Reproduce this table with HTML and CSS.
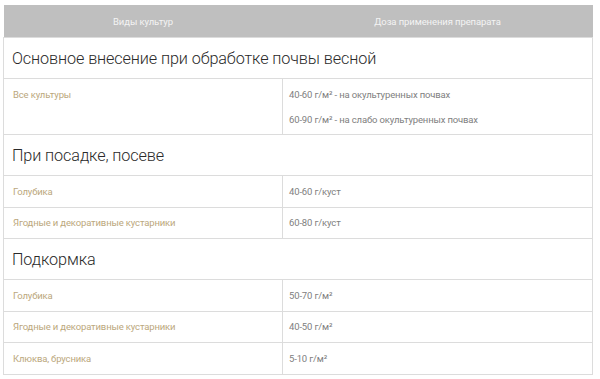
FILE: index.html
```html
<!DOCTYPE html>
<html lang="ru">
<head>
<meta charset="utf-8">
<link rel="stylesheet" href="styles.css">
</head>
<body>
<div class="wrap">
<table class="tbl">
  <thead>
    <tr><th class="c1">Виды культур</th><th class="c2">Доза применения препарата</th></tr>
  </thead>
  <tbody>
    <tr class="sec"><td colspan="2">Основное внесение при обработке почвы весной</td></tr>
    <tr class="row tall">
      <td class="crop">Все культуры</td>
      <td class="dose"><p>40-60 г/м² - на окультуренных почвах</p><p>60-90 г/м² - на слабо окультуренных почвах</p></td>
    </tr>
    <tr class="sec"><td colspan="2">При посадке, посеве</td></tr>
    <tr class="row"><td class="crop">Голубика</td><td class="dose">40-60 г/куст</td></tr>
    <tr class="row"><td class="crop">Ягодные и декоративные кустарники</td><td class="dose">60-80 г/куст</td></tr>
    <tr class="sec"><td colspan="2">Подкормка</td></tr>
    <tr class="row"><td class="crop">Голубика</td><td class="dose">50-70 г/м²</td></tr>
    <tr class="row"><td class="crop">Ягодные и декоративные кустарники</td><td class="dose">40-50 г/м²</td></tr>
    <tr class="row"><td class="crop">Клюква, брусника</td><td class="dose">5-10 г/м²</td></tr>
  </tbody>
</table>
</div>
</body>
</html>
```
FILE: styles.css
```css
html, body { margin: 0; padding: 0; background: #fff; }
.wrap { padding: 5px 7px 0 3px; }
.tbl {
  width: 590px;
  border-collapse: collapse;
  table-layout: fixed;
  font-family: Roboto, "Liberation Sans", sans-serif;
}
.tbl th {
  background: #bfbfbf;
  color: #f4f4f4;
  font-weight: 400;
  font-size: 9.5px;
  height: 32px;
  padding: 0;
  text-align: center;
  letter-spacing: -0.1px;
}
.tbl th.c1 { width: 279px; }
.tbl td { border: 1px solid #dcdcdc; padding: 0 0 0 9px; vertical-align: middle; }
.sec td {
  height: 40px;
  font-size: 16.2px;
  color: #2a2a2a;
  font-weight: 300;
  letter-spacing: -0.1px;
  padding-left: 8px;
}
.row td { height: 30.5px; font-size: 9.5px; letter-spacing: -0.15px; }
.crop { color: #bba77c; }
.dose { color: #808080; padding-left: 6px !important; }
.tall td { height: auto; vertical-align: top; padding-bottom: 9px; }
.tall .crop { padding-top: 10px; line-height: 11px; }
.dose p { margin: 10px 0 0; line-height: 11px; }
.dose p + p { margin-top: 14px; }
```
